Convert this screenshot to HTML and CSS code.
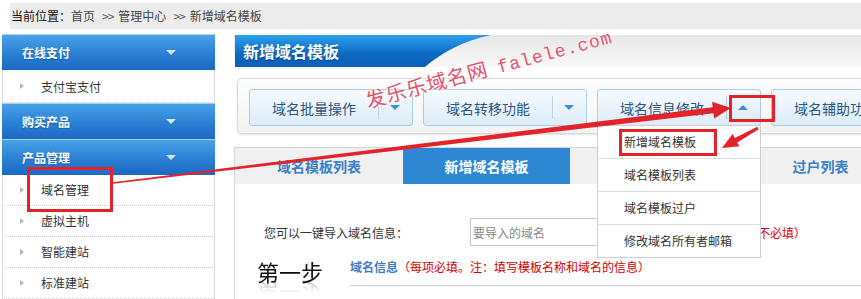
FILE: index.html
```html
<!DOCTYPE html>
<html lang="zh-CN">
<head>
<meta charset="utf-8">
<title>新增域名模板</title>
<link rel="stylesheet" href="styles.css">
</head>
<body>
<div class="crumb"><span class="crumb-lead">当前位置：</span>首页<span class="sep">&gt;&gt;</span>管理中心<span class="sep">&gt;&gt;</span>新增域名模板</div>
<div class="page">
  <aside class="sidebar">
    <div class="sb-head">在线支付<i class="sb-tri"></i></div>
    <ul class="sb-list single"><li>支付宝支付</li></ul>
    <div class="sb-head">购买产品<i class="sb-tri"></i></div>
    <div class="sb-head">产品管理<i class="sb-tri"></i></div>
    <ul class="sb-list"><li>域名管理</li><li>虚拟主机</li><li>智能建站</li><li>标准建站</li></ul>
  </aside>
  <main class="main">
    <div class="title-bar"><div class="title-blue"><h1>新增域名模板</h1></div></div>
    <div class="toolbar">
      <div class="btn"><span class="btn-label">域名批量操作</span><span class="btn-arrow"><i class="caret-down"></i></span></div>
      <div class="btn"><span class="btn-label">域名转移功能</span><span class="btn-arrow"><i class="caret-down"></i></span></div>
      <div class="btn"><span class="btn-label">域名信息修改</span><span class="btn-arrow"><i class="caret-up"></i></span>
        <ul class="menu">
          <li>新增域名模板</li>
          <li>域名模板列表</li>
          <li>域名模板过户</li>
          <li>修改域名所有者邮箱</li>
        </ul>
      </div>
      <div class="btn"><span class="btn-label">域名辅助功能</span><span class="btn-arrow"><i class="caret-down"></i></span></div>
    </div>
    <div class="tabs">
      <div class="tab first">域名模板列表</div>
      <div class="tab active">新增域名模板</div>
      <div class="tab"></div>
      <div class="tab">过户列表</div>
    </div>
    <div class="panel">
      <div class="import">
        <span class="import-label">您可以一键导入域名信息：</span>
        <input class="import-input" type="text" placeholder="要导入的域名">
        <span class="req-note">（不必填）</span>
      </div>
      <div class="step">
        <div class="step-title">第一步</div>
        <div class="step-body"><span class="step-name">域名信息</span><span class="step-note">（每项必填。注：填写模板名称和域名的信息）</span></div>
      </div>
    </div>
  </main>
</div>

<div class="watermark"><span class="wm-cn">发乐乐域名网</span><span class="wm-en">falele.com</span></div>

<svg class="marks" width="861" height="299" viewBox="0 0 861 299" xmlns="http://www.w3.org/2000/svg">
  <g fill="none" stroke="#e4222a" stroke-width="3">
    <rect x="28.5" y="168.5" width="83" height="42"/>
    <rect x="730.5" y="96.5" width="43" height="24"/>
    <rect x="620.5" y="130.5" width="95" height="24"/>
  </g>
  <g fill="#e4222a">
    <polygon points="112.9,182.2 712.7,107.2 712.1,101.8 731,108 714.1,118.6 713.5,113.2 113.1,183.8"/>
    <polygon points="757.3,126.7 734.8,138 732.6,134.1 722,148 739.4,146.3 737.2,142.4 758.7,129.3"/>
  </g>
</svg>
</body>
</html>
```

FILE: styles.css
```css
html, body {
  margin: 0;
  padding: 0;
  overflow: hidden;
}
body {
  width: 861px;
  height: 299px;
  position: relative;
  background: #fff;
  font-family: "Noto Sans CJK SC", "Noto Sans", sans-serif;
  font-size: 12px;
  color: #333;
}
ul { list-style: none; margin: 0; padding: 0; }

/* breadcrumb */
.crumb {
  margin: 3px 0 0 10px;
  height: 26px;
  line-height: 26px;
  padding-left: 1px;
  background: #ececec;
  color: #444;
  font-size: 12px;
}
.crumb-lead { color: #111; }
.crumb .sep {
  margin: 0 5px 0 7px;
  letter-spacing: -1px;
  color: #555;
}

.page {
  display: flex;
  align-items: flex-start;
  margin-top: 5px;
}

/* sidebar */
.sidebar {
  width: 213px;
  margin-left: 2px;
  flex-shrink: 0;
}
.sb-head {
  box-sizing: border-box;
  height: 36px;
  border-top: 1px solid #a6d2f2;
  padding: 0 39px 0 20px;
  display: flex;
  align-items: center;
  justify-content: space-between;
  color: #fff;
  font-weight: bold;
  font-size: 12px;
  background: linear-gradient(#48a2e8, #2a7fd3 55%, #1b69c4);
  text-shadow: 0 1px 1px rgba(0, 40, 100, .35);
}
.sb-tri {
  width: 0;
  height: 0;
  border-left: 5px solid transparent;
  border-right: 5px solid transparent;
  border-top: 5px solid #d9e6f2;
}
.sb-list li {
  position: relative;
  box-sizing: border-box;
  height: 31px;
  line-height: 30px;
  padding-left: 38px;
  border-left: 1px solid #dcdcdc;
  border-right: 1px solid #dcdcdc;
  border-bottom: 1px dotted #cfcfcf;
  color: #333;
  background: #fff;
}
.sb-list.single li { height: 33px; line-height: 33px; }
.sb-list li::before {
  content: "";
  position: absolute;
  left: 17px;
  top: 50%;
  margin-top: -3px;
  border-left: 4px solid #b5b5b5;
  border-top: 3px solid transparent;
  border-bottom: 3px solid transparent;
}

/* main */
.main {
  width: 680px;
  flex-shrink: 0;
  margin-left: 19px;
  margin-top: 1px;
}
.title-bar {
  height: 32px;
  background: linear-gradient(#e6e6e6, #f9f9f9);
}
.title-blue {
  width: 256px;
  height: 32px;
  margin-left: 1px;
  padding-left: 8px;
  box-sizing: border-box;
  background: linear-gradient(#2da0ec, #0d68c2 60%, #0a5fb8);
  clip-path: path('M0 0 H256 C228 6 206 18 190 32 H0 Z');
}
.title-blue h1 {
  margin: 0;
  font-size: 16px;
  line-height: 32px;
  font-weight: bold;
  color: #fff;
  text-shadow: 0 1px 1px rgba(0, 30, 80, .5);
}

/* toolbar */
.toolbar {
  box-sizing: border-box;
  height: 56px;
  margin: 11px 0 0 3px;
  padding: 10px 11px;
  display: flex;
  gap: 10px;
  border: 1px solid #d8d8d8;
  border-radius: 5px;
  background: linear-gradient(#fdfdfd, #f3f3f3);
  box-shadow: 0 1px 2px rgba(0, 0, 0, .12);
}
.btn {
  position: relative;
  flex-shrink: 0;
  box-sizing: border-box;
  width: 164px;
  height: 37px;
  display: flex;
  align-items: center;
  border: 1px solid #a9cce8;
  border-radius: 3px;
  background: linear-gradient(#f6fbff, #ddecf8);
  color: #2f5580;
  font-size: 14px;
}
.btn-label { flex: 1; text-align: center; white-space: nowrap; }
.btn-arrow {
  position: relative;
  width: 34px;
  height: 100%;
  display: flex;
  align-items: center;
  justify-content: center;
}
.btn-arrow::before {
  content: "";
  position: absolute;
  left: 0;
  top: 6px;
  bottom: 6px;
  width: 1px;
  background: #b6d3ea;
}
.caret-down, .caret-up {
  width: 0;
  height: 0;
  border-left: 5px solid transparent;
  border-right: 5px solid transparent;
}
.caret-down { border-top: 5px solid #3f8fd5; }
.caret-up { border-bottom: 5px solid #3f8fd5; }

.menu {
  position: absolute;
  z-index: 5;
  left: -1px;
  top: 35px;
  width: 164px;
  box-sizing: border-box;
  background: #fff;
  border: 1px solid #cfcfcf;
}
.menu li {
  height: 32px;
  line-height: 32px;
  padding-left: 26px;
  font-size: 12px;
  color: #333;
  border-top: 1px solid #dcdcdc;
}
.menu li:first-child { border-top: 0; }

/* tabs */
.tabs {
  box-sizing: border-box;
  height: 37px;
  margin-top: 13px;
  display: flex;
  border-top: 1px solid #d6d6d6;
  border-left: 1px solid #d6d6d6;
  background: #f0f0f0;
}
.tab {
  width: 167px;
  flex-shrink: 0;
  line-height: 36px;
  text-align: center;
  font-size: 14px;
  font-weight: bold;
  color: #3b80c9;
}
.tab.first { width: 168px; }
.tab.active { background: #2e87d3; color: #fff; }

/* panel */
.panel {
  border-left: 1px solid #dcdcdc;
  height: 120px;
  padding-top: 34px;
}
.import {
  display: flex;
  align-items: center;
  padding-left: 29px;
}
.import-label { width: 206px; color: #333; }
.import-input {
  box-sizing: border-box;
  width: 272px;
  height: 28px;
  margin: 0;
  padding: 0 2px;
  border: 1px solid #c9c9c9;
  font-family: inherit;
  font-size: 12px;
  color: #333;
}
.import-input::placeholder { color: #888; }
.req-note { margin-left: 4px; color: #d40000; }

.step {
  display: flex;
  margin-top: 12px;
  padding-left: 22px;
}
.step-title {
  width: 93px;
  font-size: 22px;
  line-height: 26px;
  color: #111;
  -webkit-box-reflect: below -8px linear-gradient(transparent 45%, rgba(255, 255, 255, .35));
}
.step-body {
  flex: 1;
  line-height: 18px;
  padding-bottom: 9px;
  border-bottom: 1px solid #cfcfcf;
}
.step-name { color: #3c7cc4; font-weight: bold; }
.step-note { color: #d40000; }

/* overlays */
.watermark {
  position: absolute;
  z-index: 9;
  left: 362px;
  top: 86px;
  white-space: nowrap;
  transform: rotate(-15deg);
  transform-origin: 0 0;
  color: #e6506a;
  text-shadow: 0 0 2px #fff, 0 0 2px #fff;
}
.wm-cn {
  font-family: "Noto Sans CJK SC", sans-serif;
  font-size: 20px;
  letter-spacing: 1px;
}
.wm-en {
  margin-left: 10px;
  font-family: "Liberation Mono", monospace;
  font-size: 18px;
  letter-spacing: 1px;
}
.marks {
  position: absolute;
  z-index: 10;
  left: 0;
  top: 0;
  pointer-events: none;
}
```
